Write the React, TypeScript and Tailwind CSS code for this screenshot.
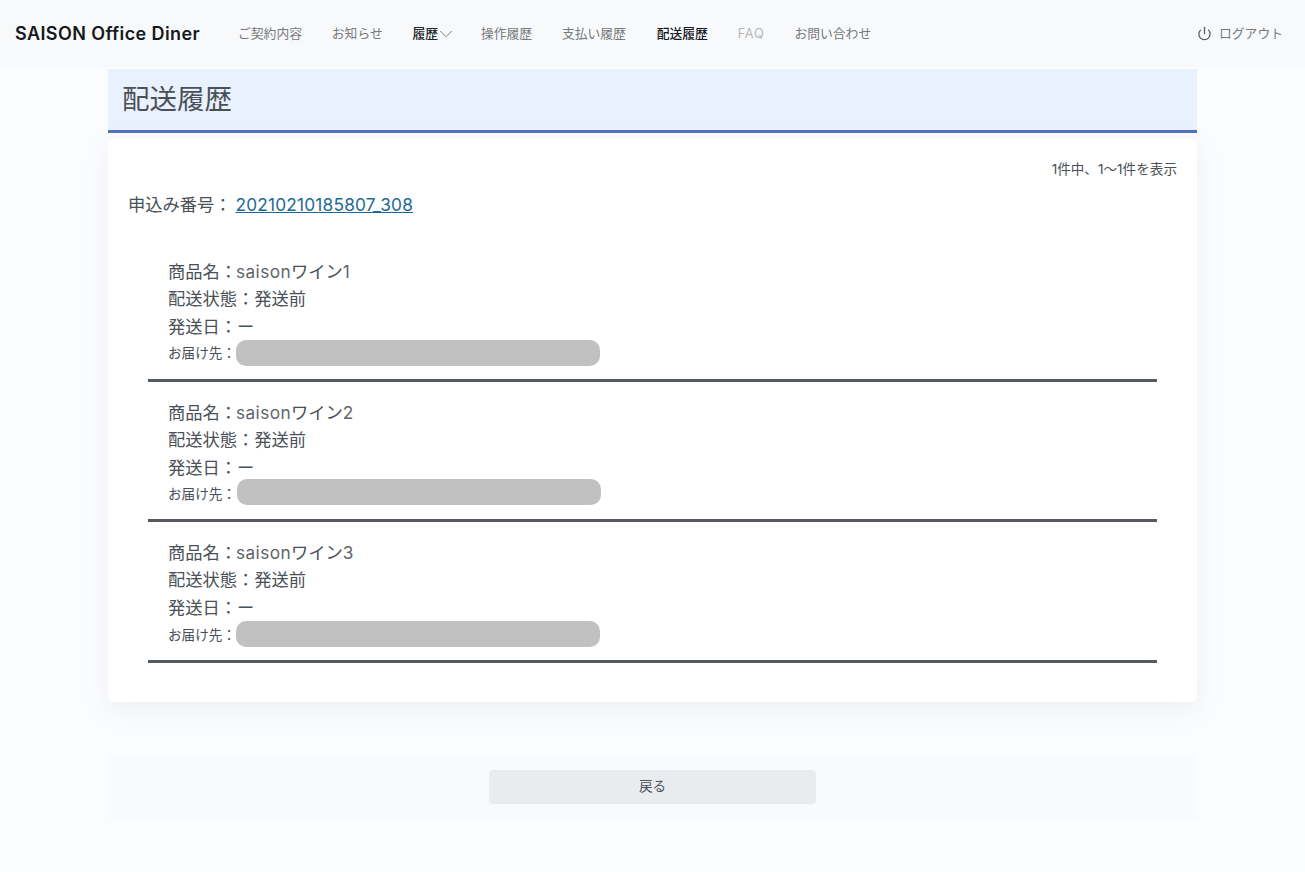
import React from "react";
import { Power, ChevronDown } from "lucide-react";

const font = { fontFamily: '"Inter","Noto Sans CJK JP",sans-serif' };

function Nav({ children, cls = "text-[#777a7c]" }: { children: React.ReactNode; cls?: string }) {
  return <span className={`text-[12.8px] leading-[18px] whitespace-nowrap ${cls}`}>{children}</span>;
}

function Item({ n, h, ml, barMt, labelCls }: { n: number; h: string; ml: string; barMt: string; labelCls: string }) {
  return (
    <div className={`${h} flex flex-col border-b-[3px] border-[#565b62] px-5 pt-[16.6px] text-[#495057]`}>
      <div className="text-[17.25px] leading-[27.6px] h-[27.6px] whitespace-nowrap">
        商品名：<span className="-ml-[1px] text-[#5f656b] tracking-[0.4px]">saison</span>ワイン<span className="text-[#5f656b]">{n}</span>
      </div>
      <div className="text-[17.25px] leading-[27.6px] h-[27.6px]">配送状態：発送前</div>
      <div className="text-[17.25px] leading-[27.6px] h-[27.6px]">発送日：ー</div>
      <div className={`flex items-center h-[26px] ${barMt}`}>
        <span className={`text-[13.6px] leading-[26px] w-[68px] whitespace-nowrap ${labelCls}`}>お届け先：</span>
        <div className={`w-[364px] ${ml} h-[26px] rounded-[10px] bg-[#c1c1c1]`} />
      </div>
    </div>
  );
}

export default function App() {
  return (
    <div style={font} className="min-h-[872px] bg-[#fbfcfe]">
      <header className="h-[67px] bg-[#f8f9fb] flex items-center pl-[15px] pr-[22px]">
        <div className="text-[18px] font-semibold text-[#16181b] tracking-[0.4px] whitespace-nowrap w-[223px]">SAISON Office Diner</div>
        <nav className="flex items-center gap-[29.8px]">
          <Nav>ご契約内容</Nav>
          <Nav>お知らせ</Nav>
          <span className="flex items-center gap-[2px]">
            <Nav cls="text-[#212529] font-medium">履歴</Nav>
            <ChevronDown className="w-[22px] h-[22px] -mx-[5.5px] text-[#777a7c]" strokeWidth={1} />
          </span>
          <Nav>操作履歴</Nav>
          <Nav>支払い履歴</Nav>
          <Nav cls="ml-[1px] text-[#16181b] font-medium">配送履歴</Nav>
          <Nav cls="text-[#b5b7b9] tracking-[0.8px]">FAQ</Nav>
          <Nav>お問い合わせ</Nav>
        </nav>
        <div className="ml-auto flex items-center gap-[7px]">
          <Power className="w-[15px] h-[15px] text-[#555a5e]" strokeWidth={2} />
          <Nav>ログアウト</Nav>
        </div>
      </header>

      <main className="w-[1089px] ml-[108px] pt-[2px]">
        <div className="h-[64px] bg-[#eaf1fe] border-b-[3px] border-[#5070c0] pl-[14px] flex items-center">
          <h1 className="text-[27.5px] leading-[61px] text-[#495057]">配送履歴</h1>
        </div>

        <section className="mt-[6px] h-[563px] bg-white rounded-[5px] shadow-[0_8px_24px_rgba(140,152,164,0.13)] px-5 pt-[20px]">
          <div className="text-right text-[13.6px] leading-[20px] text-[#495057]">1件中、1〜1件を表示</div>
          <div className="mt-[14px] text-[17.25px] leading-[24px] text-[#495057] whitespace-nowrap">
            申込み番号：<a className="ml-[4px] text-[#1e6b92] underline tracking-[0.2px]">20210210185807_308</a>
          </div>
          <div className="mt-[24px] mx-5 flex flex-col">
            <Item n={1} h="h-[141px]" ml="" barMt="-mt-[0.6px]" labelCls="pt-[1px]" />
            <Item n={2} h="h-[140px]" ml="ml-[1px]" barMt="-mt-[2.6px]" labelCls="pt-[4px]" />
            <Item n={3} h="h-[141px]" ml="" barMt="-mt-[0.6px]" labelCls="pt-[2px]" />
          </div>
        </section>

        <div className="mt-[53px] h-[65px] bg-[#f9fafc] flex items-start justify-center pt-[15px]">
          <button className="w-[327px] h-[34px] rounded-[4px] bg-[#e9ecef] text-[13.6px] leading-[32px] pb-[2px] text-[#495057]">戻る</button>
        </div>
      </main>
    </div>
  );
}
